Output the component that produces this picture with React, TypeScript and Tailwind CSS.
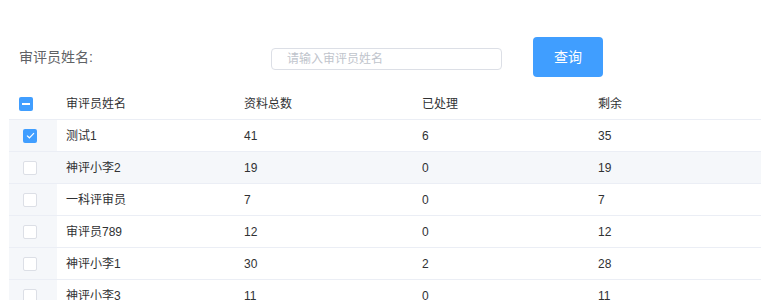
import React, { useState } from 'react';

const rows = [
  { name: '测试1', total: 41, done: 6, left: 35 },
  { name: '神评小李2', total: 19, done: 0, left: 19 },
  { name: '一科评审员', total: 7, done: 0, left: 7 },
  { name: '审评员789', total: 12, done: 0, left: 12 },
  { name: '神评小李1', total: 30, done: 2, left: 28 },
  { name: '神评小李3', total: 11, done: 0, left: 11 },
];

function Checkbox({ checked }: { checked: boolean }) {
  if (checked) {
    return (
      <div className="w-[14px] h-[14px] rounded-[2px] bg-[#409eff] flex items-center justify-center">
        <svg width="9" height="7" viewBox="0 0 9 7" fill="none">
          <path d="M1 3.6 L3.4 5.8 L8 1.2" stroke="white" strokeWidth="1.2" />
        </svg>
      </div>
    );
  }
  return <div className="w-[14px] h-[14px] rounded-[2px] border border-[#dcdfe6] bg-white" />;
}

export default function App() {
  const [keyword, setKeyword] = useState('');
  const [selected] = useState<number[]>([0]);

  return (
    <div
      className="w-[761px] h-[300px] overflow-hidden bg-white text-[#303133]"
      style={{ fontFamily: '"Liberation Sans", "Noto Sans CJK SC", sans-serif' }}
    >
      <div className="flex items-center h-[40px] mt-[37px] pl-[19px]">
        <div className="w-[252px] text-[14px] text-[#606266]">审评员姓名:</div>
        <input
          value={keyword}
          onChange={e => setKeyword(e.target.value)}
          placeholder="请输入审评员姓名"
          className="w-[231px] h-[22px] mt-[4px] border border-[#dcdfe6] rounded-[4px] px-[15px] text-[12px] outline-none placeholder:text-[#c0c4cc]"
        />
        <button className="ml-[31px] w-[70px] h-[40px] rounded-[4px] bg-[#409eff] text-white text-[14px]">
          查询
        </button>
      </div>

      <div className="ml-[9px] mt-[11px] text-[12px] overflow-hidden">
        <div className="flex h-[32px] items-center border-b border-[#ebeef5] w-[760px]">
          <div className="w-[48px] shrink-0 pl-[10px]">
            <div className="w-[14px] h-[14px] rounded-[2px] bg-[#409eff] flex items-center justify-center">
              <div className="w-[8px] h-[2px] bg-white" />
            </div>
          </div>
          <div className="w-[178px] shrink-0 pl-[9px]">审评员姓名</div>
          <div className="w-[178px] shrink-0 pl-[9px]">资料总数</div>
          <div className="w-[176px] shrink-0 pl-[9px]">已处理</div>
          <div className="w-[178px] shrink-0 pl-[9px]">剩余</div>
        </div>
        {rows.map((r, i) => (
          <div
            key={r.name}
            className={`flex h-[32px] items-center border-b border-[#ebeef5] w-[760px] ${i === 1 ? 'bg-[#f5f7fa]' : 'bg-white'}`}
          >
            <div className="w-[48px] shrink-0 h-full flex items-center pl-[14px] bg-[#f5f7fa]">
              <Checkbox checked={selected.includes(i)} />
            </div>
            <div className="w-[178px] shrink-0 pl-[9px]">{r.name}</div>
            <div className="w-[178px] shrink-0 pl-[9px]">{r.total}</div>
            <div className="w-[176px] shrink-0 pl-[9px]">{r.done}</div>
            <div className="w-[178px] shrink-0 pl-[9px]">{r.left}</div>
          </div>
        ))}
      </div>
    </div>
  );
}
